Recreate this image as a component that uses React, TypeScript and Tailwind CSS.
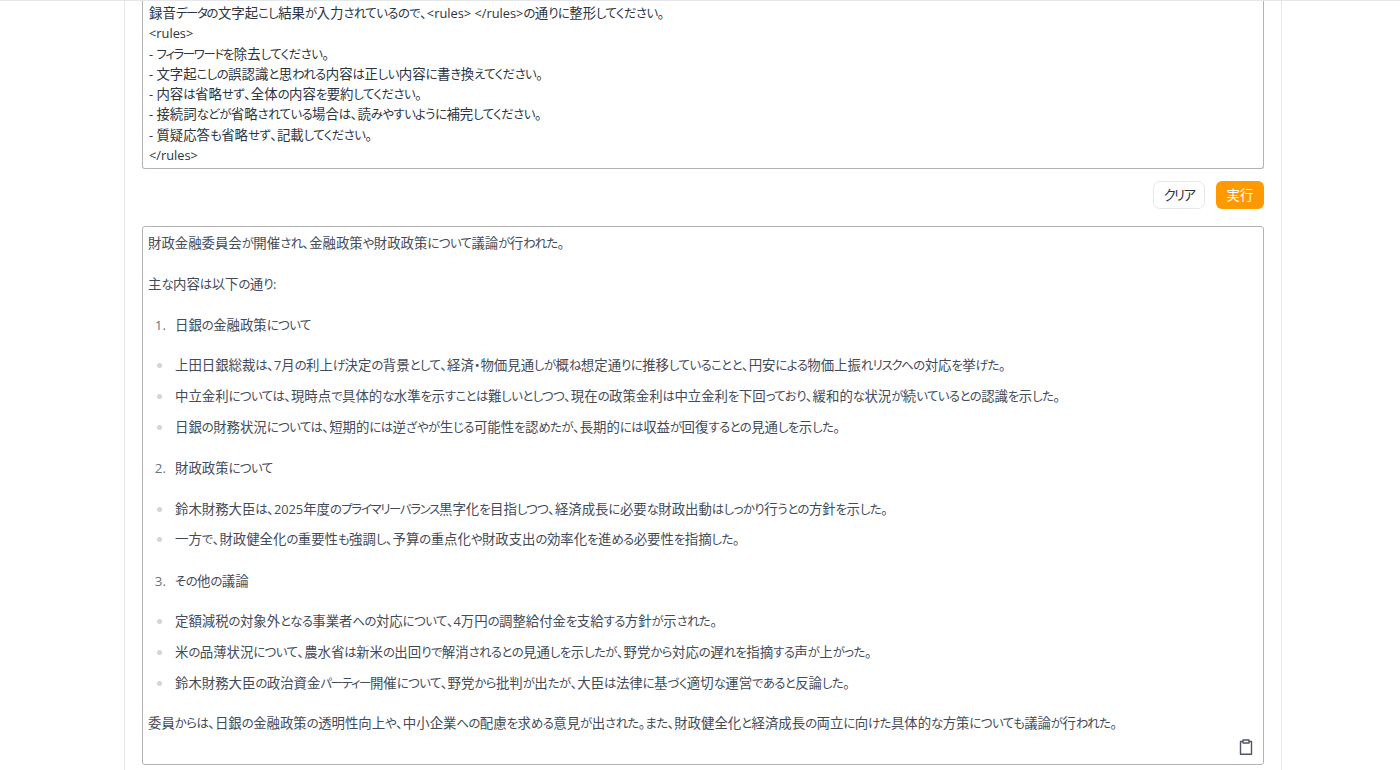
const rulesLines = [
  "録音データの文字起こし結果が入力されているので、<rules> </rules>の通りに整形してください。",
  "<rules>",
  "- フィラーワードを除去してください。",
  "- 文字起こしの誤認識と思われる内容は正しい内容に書き換えてください。",
  "- 内容は省略せず、全体の内容を要約してください。",
  "- 接続詞などが省略されている場合は、読みやすいように補完してください。",
  "- 質疑応答も省略せず、記載してください。",
  "</rules>",
];

// the reference font has much narrower kana than Noto, so kana runs get a smaller size
function Jp({ text }: { text: string }) {
  return (
    <>
      {text.split(/([ぁ-ん]+|[ァ-ヶー]+|[\x20-\x7e]+)/).map((part, i) => {
        if (i % 2 === 0) return <span key={i}>{part}</span>;
        if (/[\x20-\x7e]/.test(part)) {
          return <span key={i} className="text-[12.8px]">{part}</span>;
        }
        return /[ァ-ヶー]/.test(part) ? (
          <span key={i} className="text-[12.4px] tracking-[-1.3px]">{part}</span>
        ) : (
          <span key={i} className="text-[12.4px] tracking-[-0.55px]">{part}</span>
        );
      })}
    </>
  );
}

function Line({ text, className = "" }: { text: string; className?: string }) {
  return (
    <div className={`h-[20px] whitespace-nowrap leading-[20px] ${className}`}>
      <Jp text={text} />
    </div>
  );
}

function Numbered({ n, text }: { n: number; text: string }) {
  return (
    <div className="flex h-[20px] items-center leading-[20px]">
      <span className="w-[18px] text-right text-[#6b7280]">{n}.</span>
      <span className="ml-[9px] h-[20px]"><Jp text={text} /></span>
    </div>
  );
}

function Bullet({ text, className }: { text: string; className: string }) {
  return (
    <div className={`flex h-[20px] items-center leading-[20px] ${className}`}>
      <span className="ml-[9px] h-[5px] w-[5px] rounded-full bg-[#d1d5db]" />
      <span className="ml-[13px] h-[20px]"><Jp text={text} /></span>
    </div>
  );
}

export default function App() {
  return (
    <div className="h-[770px] overflow-hidden border-t border-[#e5e7eb] bg-white font-['Open_Sans','Noto_Sans_CJK_JP',sans-serif] text-[13.4px] [font-feature-settings:'palt']">
      <main className="ml-[124px] h-[780px] w-[1158px] border-x border-[#e5e7eb] px-[17px]">
        <div className="h-[168px] rounded-b-[3px] border-x border-b border-[#b3b3b3] px-[6px] pt-[2px] text-[#2b3442]">
          {rulesLines.map((line) => (
            <div key={line} className="h-[20.3px] whitespace-nowrap leading-[20.3px]"><Jp text={line} /></div>
          ))}
        </div>

        <div className="mt-[12px] flex justify-end gap-[11px]">
          <button className="h-[28px] w-[52px] rounded-[7px] border border-[#e5e7eb] bg-white tracking-[-1.5px] text-[#2b3442]">クリア</button>
          <button className="h-[28px] w-[48px] rounded-[6px] bg-[#ff9900] text-white">実行</button>
        </div>

        <div className="relative mt-[17px] h-[539px] rounded-[3px] border border-[#b3b3b3] px-[5px] pt-[6px] text-[#434b59]">
          <Line text="財政金融委員会が開催され、金融政策や財政政策について議論が行われた。" />
          <Line className="mt-[21px]" text="主な内容は以下の通り:" />
          <div className="mt-[21px]"><Numbered n={1} text="日銀の金融政策について" /></div>
          <Bullet className="mt-[20px]" text="上田日銀総裁は、7月の利上げ決定の背景として、経済・物価見通しが概ね想定通りに推移していることと、円安による物価上振れリスクへの対応を挙げた。" />
          <Bullet className="mt-[11px]" text="中立金利については、現時点で具体的な水準を示すことは難しいとしつつ、現在の政策金利は中立金利を下回っており、緩和的な状況が続いているとの認識を示した。" />
          <Bullet className="mt-[11px]" text="日銀の財務状況については、短期的には逆ざやが生じる可能性を認めたが、長期的には収益が回復するとの見通しを示した。" />
          <div className="mt-[21px]"><Numbered n={2} text="財政政策について" /></div>
          <Bullet className="mt-[21px]" text="鈴木財務大臣は、2025年度のプライマリーバランス黒字化を目指しつつ、経済成長に必要な財政出動はしっかり行うとの方針を示した。" />
          <Bullet className="mt-[10px]" text="一方で、財政健全化の重要性も強調し、予算の重点化や財政支出の効率化を進める必要性を指摘した。" />
          <div className="mt-[22px]"><Numbered n={3} text="その他の議論" /></div>
          <Bullet className="mt-[20px]" text="定額減税の対象外となる事業者への対応について、4万円の調整給付金を支給する方針が示された。" />
          <Bullet className="mt-[11px]" text="米の品薄状況について、農水省は新米の出回りで解消されるとの見通しを示したが、野党から対応の遅れを指摘する声が上がった。" />
          <Bullet className="mt-[11px]" text="鈴木財務大臣の政治資金パーティー開催について、野党から批判が出たが、大臣は法律に基づく適切な運営であると反論した。" />
          <Line className="mt-[20px]" text="委員からは、日銀の金融政策の透明性向上や、中小企業への配慮を求める意見が出された。また、財政健全化と経済成長の両立に向けた具体的な方策についても議論が行われた。" />
          <svg className="absolute bottom-[9px] right-[10px] h-[16px] w-[14px] text-[#4b5563]" viewBox="0 0 14 16" fill="none" stroke="currentColor" strokeWidth="1.4" strokeLinejoin="round">
            <path d="M4 2.5H1.5v12.8h11V2.5H10" />
            <path d="M4 1h6v3H4z" />
          </svg>
        </div>
      </main>
    </div>
  );
}
